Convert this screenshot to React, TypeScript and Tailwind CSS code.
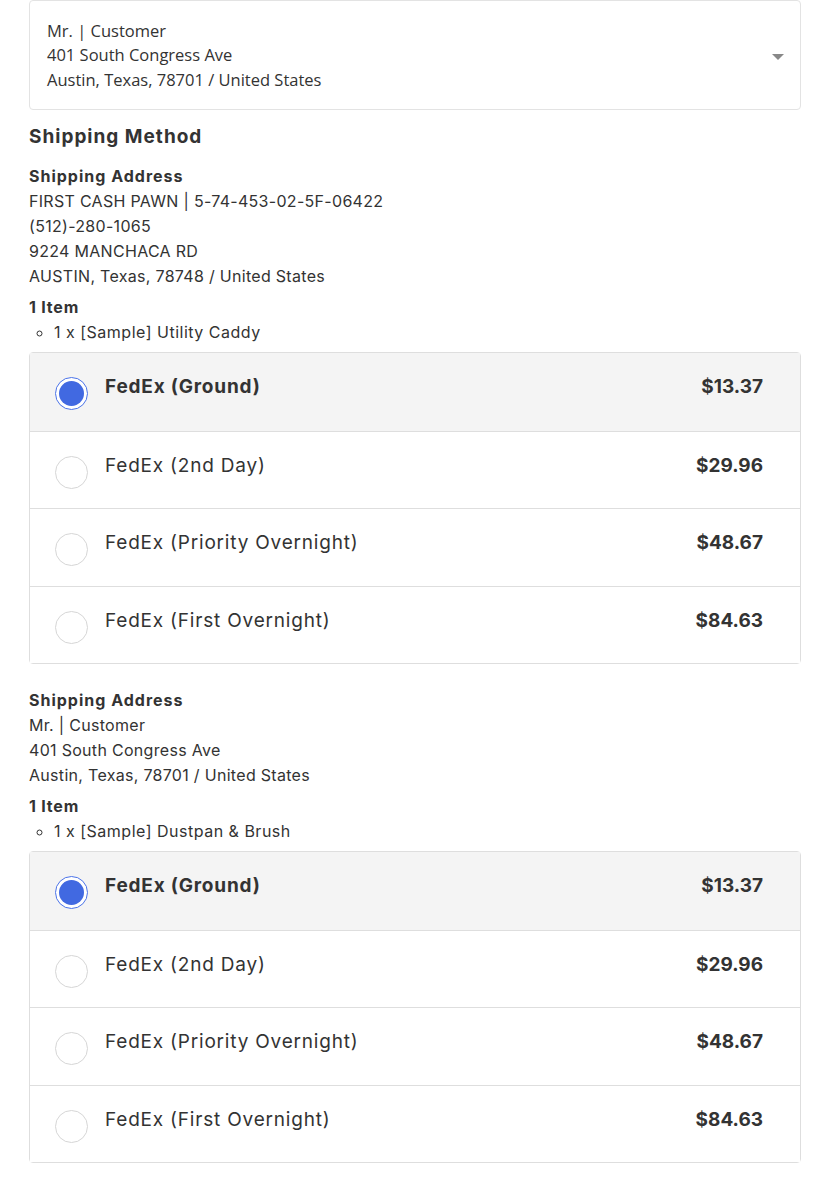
import React from "react";

type Option = { label: string; price: string };

const options: Option[] = [
  { label: "FedEx (Ground)", price: "$13.37" },
  { label: "FedEx (2nd Day)", price: "$29.96" },
  { label: "FedEx (Priority Overnight)", price: "$48.67" },
  { label: "FedEx (First Overnight)", price: "$84.63" },
];

const consignments = [
  {
    address: [
      "FIRST CASH PAWN | 5-74-453-02-5F-06422",
      "(512)-280-1065",
      "9224 MANCHACA RD",
      "AUSTIN, Texas, 78748 / United States",
    ],
    item: "1 x [Sample] Utility Caddy",
  },
  {
    address: [
      "Mr. | Customer",
      "401 South Congress Ave",
      "Austin, Texas, 78701 / United States",
    ],
    item: "1 x [Sample] Dustpan & Brush",
  },
];

function Radio({ checked }: { checked: boolean }) {
  if (checked) {
    return (
      <span className="mt-[4px] flex h-[33px] w-[33px] shrink-0 items-center justify-center rounded-full border border-[#4a72e8] bg-white">
        <span className="h-[25px] w-[25px] rounded-full bg-[#4169e1]" />
      </span>
    );
  }
  return <span className="mt-[4px] h-[33px] w-[33px] shrink-0 rounded-full border border-[#d6d6d6] bg-white" />;
}

function MethodList() {
  return (
    <ul className="rounded-[4px] border border-[#dedede]">
      {options.map((o, i) => (
        <li
          key={o.label}
          className={
            "flex h-[77.5px] items-start gap-[17px] pl-[25px] pr-[37px] pt-[20px] " +
            (i > 0 ? "border-t border-[#dedede] " : "") +
            (i === 0 ? "bg-[#f4f4f4] font-bold" : "bg-white")
          }
        >
          <Radio checked={i === 0} />
          <span className="flex-1 text-[19px] leading-[27px] tracking-[0.8px]">{o.label}</span>
          <span className="text-[19px] font-bold leading-[27px]">{o.price}</span>
        </li>
      ))}
    </ul>
  );
}

export default function App() {
  return (
    <div
      className="min-h-[1196px] bg-white px-[29px] pt-0 text-[#333333]"
      style={{ fontFamily: "Inter, 'Noto Sans', sans-serif" }}
    >
      <div
        className="relative flex h-[110px] items-center rounded-[4px] border border-[#e3e3e3] px-[17px] text-[16.5px] leading-[24.5px] text-[#333]"
        style={{ fontFamily: "'Open Sans', sans-serif" }}
      >
        <div className="pt-[1px]">
          <div>Mr. | Customer</div>
          <div>401 South Congress Ave</div>
          <div>Austin, Texas, 78701 / United States</div>
        </div>
        <span className="absolute right-[16px] top-[53px] h-0 w-0 border-x-[6px] border-t-[6px] border-x-transparent border-t-[#888]" />
      </div>

      <h2 className="mt-[14px] text-[19px] font-bold leading-[26px] tracking-[1px]">Shipping Method</h2>

      {consignments.map((c, idx) => (
        <div key={idx} className={idx === 0 ? "mt-[14px]" : "mt-[24px]"}>
          <div className="text-[16px] font-bold leading-[25px] tracking-[1px]">Shipping Address</div>
          {c.address.map((line) => (
            <div key={line} className="text-[16px] leading-[25px] tracking-[0.3px]">
              {line}
            </div>
          ))}
          <div className="mt-[6px] text-[16px] font-bold leading-[25px] tracking-[0.8px]">1 Item</div>
          <ul className="mb-[7px] list-[circle] pl-[25px] text-[16px] leading-[25px] tracking-[0.5px]">
            <li>{c.item}</li>
          </ul>
          <MethodList />
        </div>
      ))}
    </div>
  );
}
